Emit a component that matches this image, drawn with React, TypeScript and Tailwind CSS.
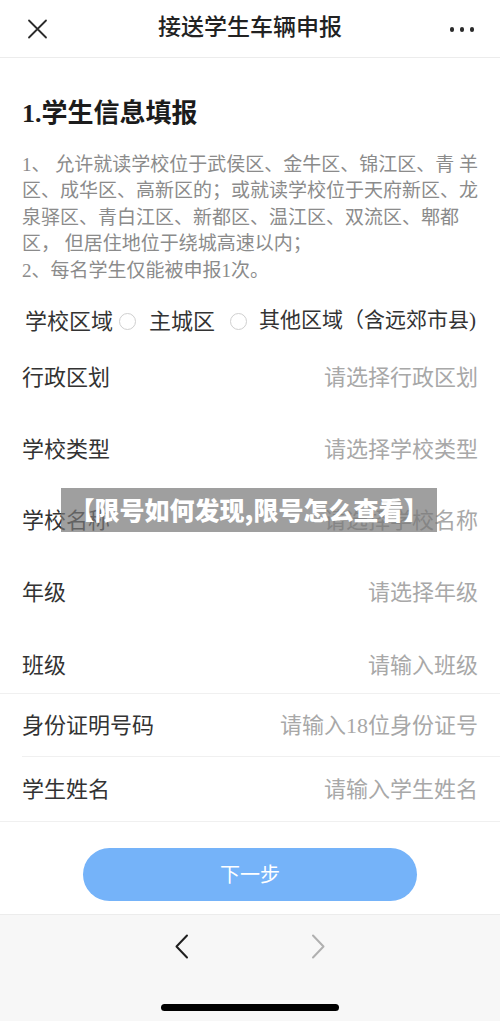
import React from "react";

const FONT = {
  fontFamily: '"Liberation Serif", "Noto Sans CJK SC", sans-serif',
};

const selectRows = [
  { label: "行政区划", hint: "请选择行政区划" },
  { label: "学校类型", hint: "请选择学校类型" },
  { label: "学校名称", hint: "请选择学校名称" },
  { label: "年级", hint: "请选择年级" },
];

const Radio = () => (
  <span className="inline-block h-[17px] w-[17px] shrink-0 rounded-full border border-[#cfcfcf] bg-white" />
);

const Row = ({
  label,
  hint,
  className,
}: {
  label: string;
  hint: string;
  className: string;
}) => (
  <div
    className={
      "flex items-center justify-between px-[22px] text-[22px] " + className
    }
  >
    <span className="text-[#333]">{label}</span>
    <span className="text-[#a8a8a8]">{hint}</span>
  </div>
);

export default function App() {
  return (
    <div className="relative flex h-[1021px] w-[500px] flex-col overflow-hidden bg-white" style={FONT}>
      {/* header */}
      <div className="relative flex h-[58px] shrink-0 items-center justify-center border-b border-[#ececec]">
        <svg
          className="absolute left-[27px] top-[19px]"
          width="21"
          height="20"
          viewBox="0 0 21 20"
          fill="none"
          stroke="#2b2b2b"
          strokeWidth="1.8"
          strokeLinecap="round"
        >
          <path d="M2 1.5 L19 18.5 M19 1.5 L2 18.5" />
        </svg>
        <span className="text-[23px] font-medium text-[#222]">接送学生车辆申报</span>
        <div className="absolute right-[26px] top-[27px] flex gap-[5.5px]">
          <span className="h-[4.5px] w-[4.5px] rounded-full bg-[#2b2b2b]" />
          <span className="h-[4.5px] w-[4.5px] rounded-full bg-[#2b2b2b]" />
          <span className="h-[4.5px] w-[4.5px] rounded-full bg-[#2b2b2b]" />
        </div>
      </div>

      {/* intro */}
      <div className="px-[22px]">
        <h1 className="mt-[38px] text-[26px] font-bold leading-[36px] text-[#1c1c1c]">
          1.学生信息填报
        </h1>
        <p className="mt-[20px] whitespace-nowrap text-[19px] leading-[26.4px] text-[#8b8b8b]">
          1、 允许就读学校位于武侯区、金牛区、锦江区、青 羊
          <br />
          区、成华区、高新区的；或就读学校位于天府新区、龙
          <br />
          泉驿区、青白江区、新都区、温江区、双流区、郫都
          <br />
          区， 但居住地位于绕城高速以内；
          <br />
          2、每名学生仅能被申报1次。
        </p>
      </div>

      {/* school area radio */}
      <div className="mt-[16px] flex h-[42px] items-center pl-[25px] text-[22px] text-[#333]">
        <span>学校区域</span>
        <span className="ml-[6px] flex items-center">
          <Radio />
        </span>
        <span className="ml-[13px]">主城区</span>
        <span className="ml-[15px] flex items-center">
          <Radio />
        </span>
        <span className="ml-[12px] whitespace-nowrap text-[21px]">其他区域（含远郊市县)</span>
      </div>

      {/* select rows */}
      {selectRows.map((r) => (
        <Row key={r.label} label={r.label} hint={r.hint} className="h-[71.5px]" />
      ))}
      <Row label="班级" hint="请输入班级" className="h-[65px] pt-[9px]" />

      <div className="h-px bg-[#f0f0f0]" />
      <Row label="身份证明号码" hint="请输入18位身份证号" className="h-[62px]" />
      <div className="ml-[22px] h-px bg-[#f0f0f0]" />
      <Row label="学生姓名" hint="请输入学生姓名" className="h-[64px]" />
      <div className="h-px bg-[#f0f0f0]" />

      {/* next button */}
      <div className="flex h-[92px] shrink-0 justify-center pt-[26px]">
        <button className="flex h-[53px] w-[334px] items-center justify-center rounded-full bg-[#75b3f9] text-[20px] text-white">
          下一步
        </button>
      </div>

      {/* browser bottom bar */}
      <div className="relative flex flex-1 flex-col items-center border-t border-[#ececec] bg-[#f7f7f7]">
        <div className="mt-[19px] flex w-full justify-center gap-[120px]">
          <svg width="16" height="25" viewBox="0 0 16 25" fill="none" stroke="#1f1f1f" strokeWidth="2" strokeLinecap="round" strokeLinejoin="round">
            <path d="M13 1.5 L2.5 12.5 L13 23.5" />
          </svg>
          <svg width="16" height="25" viewBox="0 0 16 25" fill="none" stroke="#b0b0b0" strokeWidth="2" strokeLinecap="round" strokeLinejoin="round">
            <path d="M3 1.5 L13.5 12.5 L3 23.5" />
          </svg>
        </div>
        <div className="absolute bottom-[10px] h-[7px] w-[178px] rounded-full bg-black" />
      </div>

      {/* watermark overlay */}
      <div className="absolute left-[61px] top-[488px] flex h-[44px] w-[376px] items-center justify-center bg-[rgba(118,118,118,0.7)]">
        <span
          className="whitespace-nowrap text-[25px] font-black text-white"
          style={{ fontFamily: '"Noto Sans CJK SC", sans-serif' }}
        >
          【限号如何发现,限号怎么查看】
        </span>
      </div>
    </div>
  );
}
